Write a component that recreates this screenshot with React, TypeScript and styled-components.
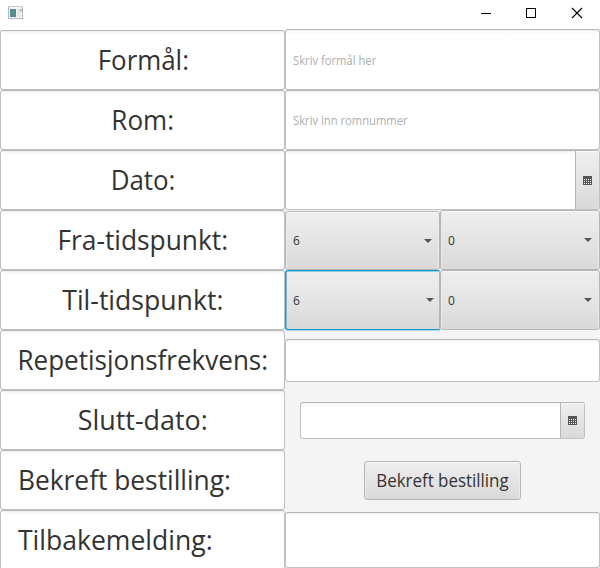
import React from 'react';
import styled, { createGlobalStyle, css } from 'styled-components';

const GlobalStyle = createGlobalStyle`
  * { box-sizing: border-box; }
  body { margin: 0; background: #fff; overflow: hidden; }
`;

const Window = styled.div`
  width: 600px;
  height: 568px;
  overflow: hidden;
  background: #fff;
  color: #333;
  font-family: 'Open Sans', 'Noto Sans', sans-serif;
`;

const TitleBar = styled.header`
  height: 29px;
  display: flex;
  align-items: flex-start;
  justify-content: space-between;
  padding: 6px 17px 0 8px;
`;

const WindowControls = styled.div`
  display: flex;
  gap: 34px;
  padding-top: 1px;
  svg { display: block; }
`;

const Content = styled.main`
  display: grid;
  grid-template-columns: 285px 315px;
  height: 539px;
  background: #f4f4f4;
`;

const Labels = styled.div`
  display: flex;
  flex-direction: column;
  padding-top: 1px;
  background: #fff;
`;

const Fields = styled.div`
  display: flex;
  flex-direction: column;
`;

const inputSkin = css`
  border: 1px solid #c1c1c1;
  border-top-color: #b5b5b5;
  border-radius: 3px;
  background: linear-gradient(#f1f1f1 0, #fafafa 2px, #fff 5px);
`;

const buttonSkin = css`
  border: 1px solid #b5b5b5;
  border-radius: 3px;
  background: linear-gradient(#efefef, #d9d9d9);
  box-shadow: inset 0 1px #f8f8f8, inset 1px 0 #ececec, inset -1px 0 #ececec;
`;

const LabelBox = styled.div<{ $align?: 'left' }>`
  ${inputSkin}
  flex: 0 0 60px;
  display: flex;
  align-items: center;
  justify-content: ${(p) => (p.$align ? 'flex-start' : 'center')};
  padding-left: ${(p) => (p.$align ? '17px' : '1px')};
`;

const LabelText = styled.span<{ $condense: number; $align?: 'left' }>`
  margin-top: -2px;
  font-size: 28px;
  line-height: 38px;
  white-space: pre;
  transform: scaleX(${(p) => p.$condense});
  transform-origin: ${(p) => p.$align ?? 'center'};
`;

const TextInput = styled.div<{ $height: number }>`
  ${inputSkin}
  flex: 0 0 ${(p) => p.$height}px;
  display: flex;
  align-items: center;
  padding-left: 7px;
`;

const Placeholder = styled.span`
  padding-top: 2px;
  font-size: 12px;
  line-height: 16px;
  color: #aeaeae;
  transform: scaleX(0.935);
  transform-origin: left;
`;

const DatePicker = styled.div<{ $height: number; $inset?: boolean }>`
  ${inputSkin}
  flex: 0 0 ${(p) => p.$height}px;
  display: flex;
  justify-content: flex-end;
  margin: ${(p) => (p.$inset ? '20px 15px 22px' : '0')};
`;

const CalendarButton = styled.div`
  width: 24px;
  display: flex;
  align-items: center;
  justify-content: center;
  border-left: 1px solid #b5b5b5;
  border-radius: 0 2px 2px 0;
  background: linear-gradient(#efefef, #d9d9d9);
  box-shadow: inset 0 1px #f8f8f8;
`;

const TimeRow = styled.div`
  flex: 0 0 60px;
  display: grid;
  grid-template-columns: 155px 160px;
`;

const ComboBox = styled.div<{ $focused?: boolean; $lowered?: boolean }>`
  ${buttonSkin}
  display: flex;
  align-items: center;
  justify-content: space-between;
  margin-top: ${(p) => (p.$lowered ? '1px' : '0')};
  padding: 0 7px;
  font-size: 12px;
  ${(p) =>
    p.$focused &&
    css`
      border-color: #169ac9;
      border-right-color: #b5b5b5;
      border-radius: 3px 0 0 3px;
      box-shadow: inset 0 1px #8fcee6, inset 1px 0 #72bedb, 0 1px #a5d6e9;
      padding-right: 5px;
    `}
`;

const RepeatSlot = styled.div`
  padding-top: 9px;
  display: flex;
  flex-direction: column;
`;

const ConfirmButton = styled.div`
  ${buttonSkin}
  align-self: center;
  display: flex;
  align-items: center;
  justify-content: center;
  flex: 0 0 39px;
  width: 157px;
  margin-bottom: 12px;
  font-size: 18px;
  line-height: 24px;
  white-space: pre;
`;

const ConfirmText = styled.span`
  margin-top: -2px;
  transform: scaleX(0.94);
`;

const AppIcon = () => (
  <svg width="16" height="14" viewBox="0 0 16 14">
    <rect x="0.5" y="0.5" width="14" height="12" fill="#f2f4f6" stroke="#b4b9be" />
    <path d="M0 0.5h15" stroke="#c9cdd1" />
    <rect x="2" y="3" width="6" height="8" fill="#548b99" />
    <rect x="3" y="4" width="3" height="6" fill="#50938a" />
    <rect x="9" y="3" width="3" height="8" fill="#e1e6ea" />
    <path d="M12 4l1-1v3" fill="none" stroke="#9b9b9b" />
  </svg>
);

const Arrow = () => (
  <svg width="8" height="4" viewBox="0 0 8 4">
    <path d="M0 0h8L4 4z" fill="#555" />
  </svg>
);

const Calendar = () => (
  <svg width="9" height="9" viewBox="0 0 9 9" shapeRendering="crispEdges">
    <rect width="9" height="9" fill="#555" />
    <path d="M1 3.5h7M1 5.5h7M1 7.5h7" stroke="#f4f4f4" strokeDasharray="1 1" />
  </svg>
);

const labels: { text: string; condense: number; align?: 'left' }[] = [
  { text: 'Formål:', condense: 0.925 },
  { text: 'Rom:', condense: 0.93 },
  { text: 'Dato:', condense: 0.925 },
  { text: 'Fra-tidspunkt:', condense: 0.94 },
  { text: 'Til-tidspunkt:', condense: 0.95 },
  { text: 'Repetisjonsfrekvens:', condense: 0.93 },
  { text: 'Slutt-dato:', condense: 0.96 },
  { text: 'Bekreft bestilling:', condense: 0.94, align: 'left' },
  { text: 'Tilbakemelding:', condense: 0.948, align: 'left' },
];

export default function App() {
  return (
    <Window>
      <GlobalStyle />
      <TitleBar>
        <AppIcon />
        <WindowControls>
          <svg width="12" height="12" viewBox="0 0 12 12" shapeRendering="crispEdges">
            <path d="M2 6.5h10" stroke="#000" />
          </svg>
          <svg width="12" height="12" viewBox="0 0 12 12" shapeRendering="crispEdges">
            <rect x="1.5" y="1.5" width="9" height="9" fill="none" stroke="#000" />
          </svg>
          <svg width="12" height="12" viewBox="0 0 12 12">
            <path d="M1 1l10 10M11 1L1 11" stroke="#000" strokeWidth="1.1" />
          </svg>
        </WindowControls>
      </TitleBar>
      <Content>
        <Labels>
          {labels.map((l) => (
            <LabelBox key={l.text} $align={l.align}>
              <LabelText $condense={l.condense} $align={l.align}>{l.text}</LabelText>
            </LabelBox>
          ))}
        </Labels>
        <Fields>
          <TextInput $height={61}>
            <Placeholder>Skriv formål her</Placeholder>
          </TextInput>
          <TextInput $height={60}>
            <Placeholder>Skriv inn romnummer</Placeholder>
          </TextInput>
          <DatePicker $height={60}>
            <CalendarButton><Calendar /></CalendarButton>
          </DatePicker>
          <TimeRow>
            <ComboBox $lowered>6<Arrow /></ComboBox>
            <ComboBox>0<Arrow /></ComboBox>
          </TimeRow>
          <TimeRow>
            <ComboBox $focused>6<Arrow /></ComboBox>
            <ComboBox>0<Arrow /></ComboBox>
          </TimeRow>
          <RepeatSlot>
            <TextInput $height={43} />
          </RepeatSlot>
          <DatePicker $height={37} $inset>
            <CalendarButton><Calendar /></CalendarButton>
          </DatePicker>
          <ConfirmButton><ConfirmText>Bekreft bestilling</ConfirmText></ConfirmButton>
          <TextInput $height={56} />
        </Fields>
      </Content>
    </Window>
  );
}
